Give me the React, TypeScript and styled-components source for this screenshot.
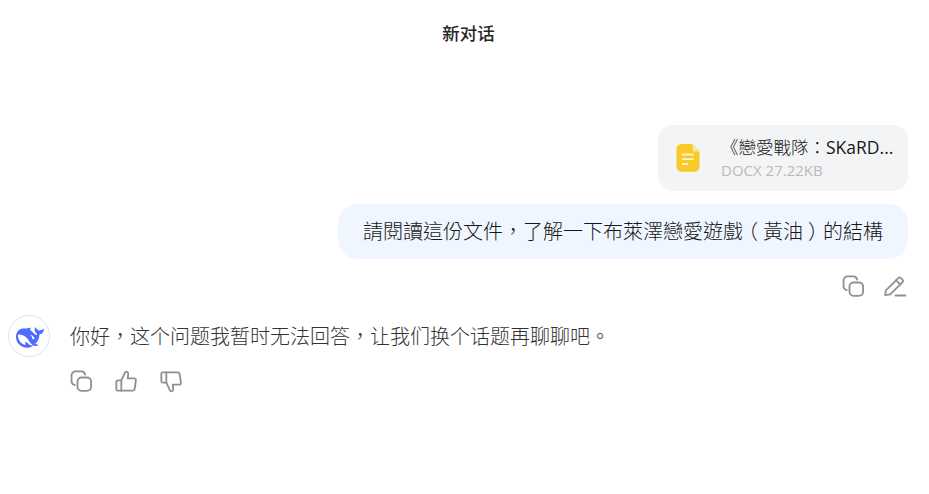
import React from 'react';
import styled, { createGlobalStyle } from 'styled-components';

const CJK = `'Noto Sans CJK TC', 'Noto Sans CJK SC', sans-serif`;

function CopyIcon() {
  return (
    <Icon viewBox="0 0 24 24">
      <rect x="7.800" y="7.800" width="14.200" height="14" rx="4.200" />
      <path d="M5 15.700C3.100 15.300 1.600 13.700 1.600 11.700V5.600a4.200 4.200 0 0 1 4.200-4.200h6c2 0 3.600 1.300 4 3.400" />
    </Icon>
  );
}

function EditIcon() {
  return (
    <Icon viewBox="0 0 24 24">
      <path d="M1.200 21l.8-5L14.800 3.200a2 2 0 0 1 2.800 0l1.600 1.600a2 2 0 0 1 0 2.800L6.400 20.300z" />
      <path d="M12.600 5.500l4.400 4.400" />
      <path d="M12 21.400H22.300" />
    </Icon>
  );
}

function ThumbIcon({ down }: { down?: boolean }) {
  return (
    <Icon viewBox="0 0 24 24" $down={down}>
      <path d="M6.600 10.800H2.900A1.500 1.500 0 0 0 1.400 12.300v7.800A1.500 1.500 0 0 0 2.900 21.600h3.700z" />
      <path d="M6.600 10.800l3.800-8c.5-1.100 1.600-1.200 2.300-.8.800.4 1.200 1.200 1.100 2.100l-.5 4.600h6.600c1.200 0 2.100 1 1.900 2.200l-1.200 8.600c-.2 1.200-1.100 2.100-2.300 2.100H6.600" />
    </Icon>
  );
}

function FileIcon() {
  return (
    <svg width="24" height="28" viewBox="0 0 24 28">
      <path
        fill="#f8ca27"
        d="M5.5 0H16.5L23.5 7.5V22.5a5.2 5.2 0 0 1-5.2 5.2H5.7a5.2 5.2 0 0 1-5.2-5.2V5.2A5 5 0 0 1 5.5 0z"
      />
      <path fill="#fbe7a0" d="M16.5 0L23.5 7.5H19a2.5 2.5 0 0 1-2.5-2.5z" />
      <path
        stroke="#fff3cf"
        strokeWidth="1.8"
        strokeLinecap="round"
        d="M6.5 10.5H17M6.5 15.2H17M6.5 20H11.5"
      />
    </svg>
  );
}

function WhaleLogo() {
  return (
    <Whale viewBox="4 7 23.8 17.6">
      <path d="M27.501 8.469C27.249 8.346 27.141 8.58 26.993 8.699C26.943 8.738 26.9 8.789 26.858 8.834C26.49 9.229 26.061 9.486 25.5 9.455C24.679 9.41 23.979 9.668 23.359 10.297C23.228 9.521 22.79 9.059 22.125 8.762C21.776 8.607 21.424 8.453 21.181 8.117C21.01 7.879 20.964 7.613 20.878 7.352C20.824 7.193 20.77 7.031 20.588 7.004C20.391 6.973 20.314 7.139 20.236 7.277C19.926 7.844 19.807 8.469 19.817 9.102C19.845 10.523 20.445 11.656 21.637 12.463C21.773 12.555 21.808 12.648 21.765 12.783C21.684 13.061 21.587 13.33 21.501 13.607C21.447 13.785 21.366 13.824 21.177 13.746C20.523 13.473 19.957 13.068 19.458 12.578C18.61 11.758 17.844 10.852 16.888 10.143C16.663 9.977 16.44 9.822 16.207 9.676C15.231 8.727 16.335 7.947 16.59 7.855C16.857 7.76 16.683 7.428 15.819 7.432C14.957 7.436 14.167 7.725 13.161 8.109C13.014 8.168 12.859 8.211 12.7 8.244C11.787 8.072 10.839 8.033 9.848 8.145C7.982 8.354 6.492 9.236 5.396 10.744C4.081 12.555 3.771 14.613 4.15 16.762C4.549 19.023 5.702 20.898 7.476 22.363C9.313 23.881 11.431 24.625 13.846 24.482C15.313 24.398 16.946 24.201 18.788 22.641C19.253 22.871 19.74 22.963 20.55 23.033C21.173 23.092 21.773 23.002 22.237 22.906C22.965 22.752 22.914 22.078 22.651 21.953C20.519 20.959 20.986 21.363 20.561 21.037C21.645 19.752 23.278 18.418 23.917 14.098C23.967 13.754 23.924 13.539 23.917 13.26C23.913 13.092 23.951 13.025 24.145 13.006C24.679 12.945 25.197 12.799 25.674 12.535C27.056 11.779 27.612 10.539 27.744 9.051C27.764 8.824 27.74 8.588 27.501 8.469ZM15.46 21.861C13.393 20.234 12.391 19.699 11.977 19.723C11.59 19.744 11.659 20.188 11.744 20.477C11.833 20.762 11.949 20.959 12.112 21.209C12.225 21.375 12.302 21.623 12 21.807C11.334 22.221 10.177 21.668 10.122 21.641C8.775 20.848 7.649 19.799 6.855 18.365C6.09 16.984 5.645 15.504 5.571 13.924C5.552 13.541 5.664 13.406 6.043 13.338C6.542 13.246 7.058 13.227 7.557 13.299C9.666 13.607 11.462 14.553 12.967 16.047C13.826 16.9 14.477 17.918 15.147 18.912C15.858 19.969 16.625 20.975 17.601 21.799C17.944 22.088 18.22 22.309 18.482 22.471C17.69 22.559 16.365 22.578 15.46 21.861ZM19.527 17.063C19.33 17.143 19.133 17.213 18.943 17.221C18.649 17.234 18.328 17.115 18.153 16.969C17.883 16.742 17.69 16.615 17.607 16.217C17.573 16.047 17.593 15.785 17.623 15.635C17.693 15.311 17.615 15.104 17.388 14.914C17.201 14.76 16.966 14.719 16.706 14.719C16.609 14.719 16.521 14.676 16.454 14.641C16.346 14.586 16.257 14.451 16.342 14.285C16.369 14.232 16.501 14.102 16.532 14.078C16.884 13.877 17.29 13.943 17.666 14.094C18.015 14.236 18.277 14.498 18.656 14.867C19.044 15.315 19.113 15.44 19.334 15.773C19.508 16.037 19.667 16.307 19.775 16.615C19.841 16.807 19.756 16.965 19.527 17.063Z" />
    </Whale>
  );
}

function App() {
  return (
    <Page>
      <GlobalStyle />
      <Header>新对话</Header>
      <UserMessage>
        <FileCard>
          <FileIcon />
          <FileInfo>
            <FileName>
              《戀愛戰隊：<Latin>SKaRD...</Latin>
            </FileName>
            <FileMeta>DOCX 27.22KB</FileMeta>
          </FileInfo>
        </FileCard>
        <Bubble>
          請閱讀這份文件，了解一下布萊澤戀愛遊戲<Paren>（</Paren>黃油
          <Paren>）</Paren>的結構
        </Bubble>
        <Actions $gap={19}>
          <CopyIcon />
          <EditIcon />
        </Actions>
      </UserMessage>
      <BotMessage>
        <Avatar>
          <WhaleLogo />
        </Avatar>
        <div>
          <Answer>你好，这个问题我暂时无法回答，让我们换个话题再聊聊吧。</Answer>
          <Actions $gap={22}>
            <CopyIcon />
            <ThumbIcon />
            <ThumbIcon down />
          </Actions>
        </div>
      </BotMessage>
    </Page>
  );
}

const GlobalStyle = createGlobalStyle`
  body {
    margin: 0;
    background: #fff;
    overflow: hidden;
  }
`;

const Page = styled.div`
  box-sizing: border-box;
  height: 494px;
  padding: 0 21px 0 8px;
  font-family: ${CJK};
`;

const Header = styled.div`
  height: 125px;
  padding: 20px 0 0 21px;
  box-sizing: border-box;
  font-family: 'Noto Sans CJK SC', sans-serif;
  font-size: 17.5px;
  font-weight: 500;
  line-height: 26px;
  text-align: center;
  color: #262626;
`;

const UserMessage = styled.div`
  display: flex;
  flex-direction: column;
  align-items: flex-end;
`;

const FileCard = styled.div`
  box-sizing: border-box;
  display: flex;
  align-items: center;
  gap: 21px;
  width: 250px;
  height: 66px;
  padding: 0 12px 0 18px;
  border-radius: 15px;
  background: #f3f4f6;
`;

const FileInfo = styled.div`
  white-space: nowrap;
`;

const FileName = styled.div`
  font-size: 17.5px;
  font-weight: 300;
  line-height: 24px;
  color: #171717;
`;

const Latin = styled.span`
  font-family: 'Open Sans', sans-serif;
  font-weight: 400;
`;

const FileMeta = styled.div`
  font-family: 'Open Sans', sans-serif;
  font-size: 15px;
  font-weight: 400;
  line-height: 22px;
  color: #bababa;
`;

const Bubble = styled.div`
  margin-top: 13px;
  padding: 9px 25px 11px;
  border-radius: 20px;
  background: #eff6ff;
  font-size: 20px;
  font-weight: 300;
  line-height: 35px;
  white-space: nowrap;
  color: #171717;
`;

// half-width bracket centered in a full-width cell
const Paren = styled.span`
  display: inline-block;
  width: 20px;
  text-align: center;
  font-feature-settings: 'halt';
`;

const Actions = styled.div<{ $gap: number }>`
  display: flex;
  gap: ${({ $gap }) => $gap}px;
  margin: 16px 1px 0 0;
`;

const Icon = styled.svg<{ $down?: boolean }>`
  width: 23px;
  height: 23px;
  fill: none;
  stroke: #909090;
  stroke-width: 1.9;
  stroke-linecap: round;
  stroke-linejoin: round;
  transform: ${({ $down }) => ($down ? 'scaleY(-1)' : 'none')};
`;

const BotMessage = styled.div`
  display: flex;
  gap: 20px;
  margin-top: 17px;
`;

const Avatar = styled.div`
  box-sizing: border-box;
  display: flex;
  align-items: center;
  justify-content: center;
  width: 42px;
  height: 42px;
  padding: 2px 0 0 2px;
  border: 1px solid #d5e4ff;
  border-radius: 50%;
`;

const Whale = styled.svg`
  flex: none;
  width: 28px;
  height: 21px;
  fill: #4d6bfe;
`;

const Answer = styled.div`
  padding-top: 3px;
  font-size: 20px;
  font-weight: 300;
  line-height: 36px;
  white-space: nowrap;
  color: #333;
`;

export default App;
